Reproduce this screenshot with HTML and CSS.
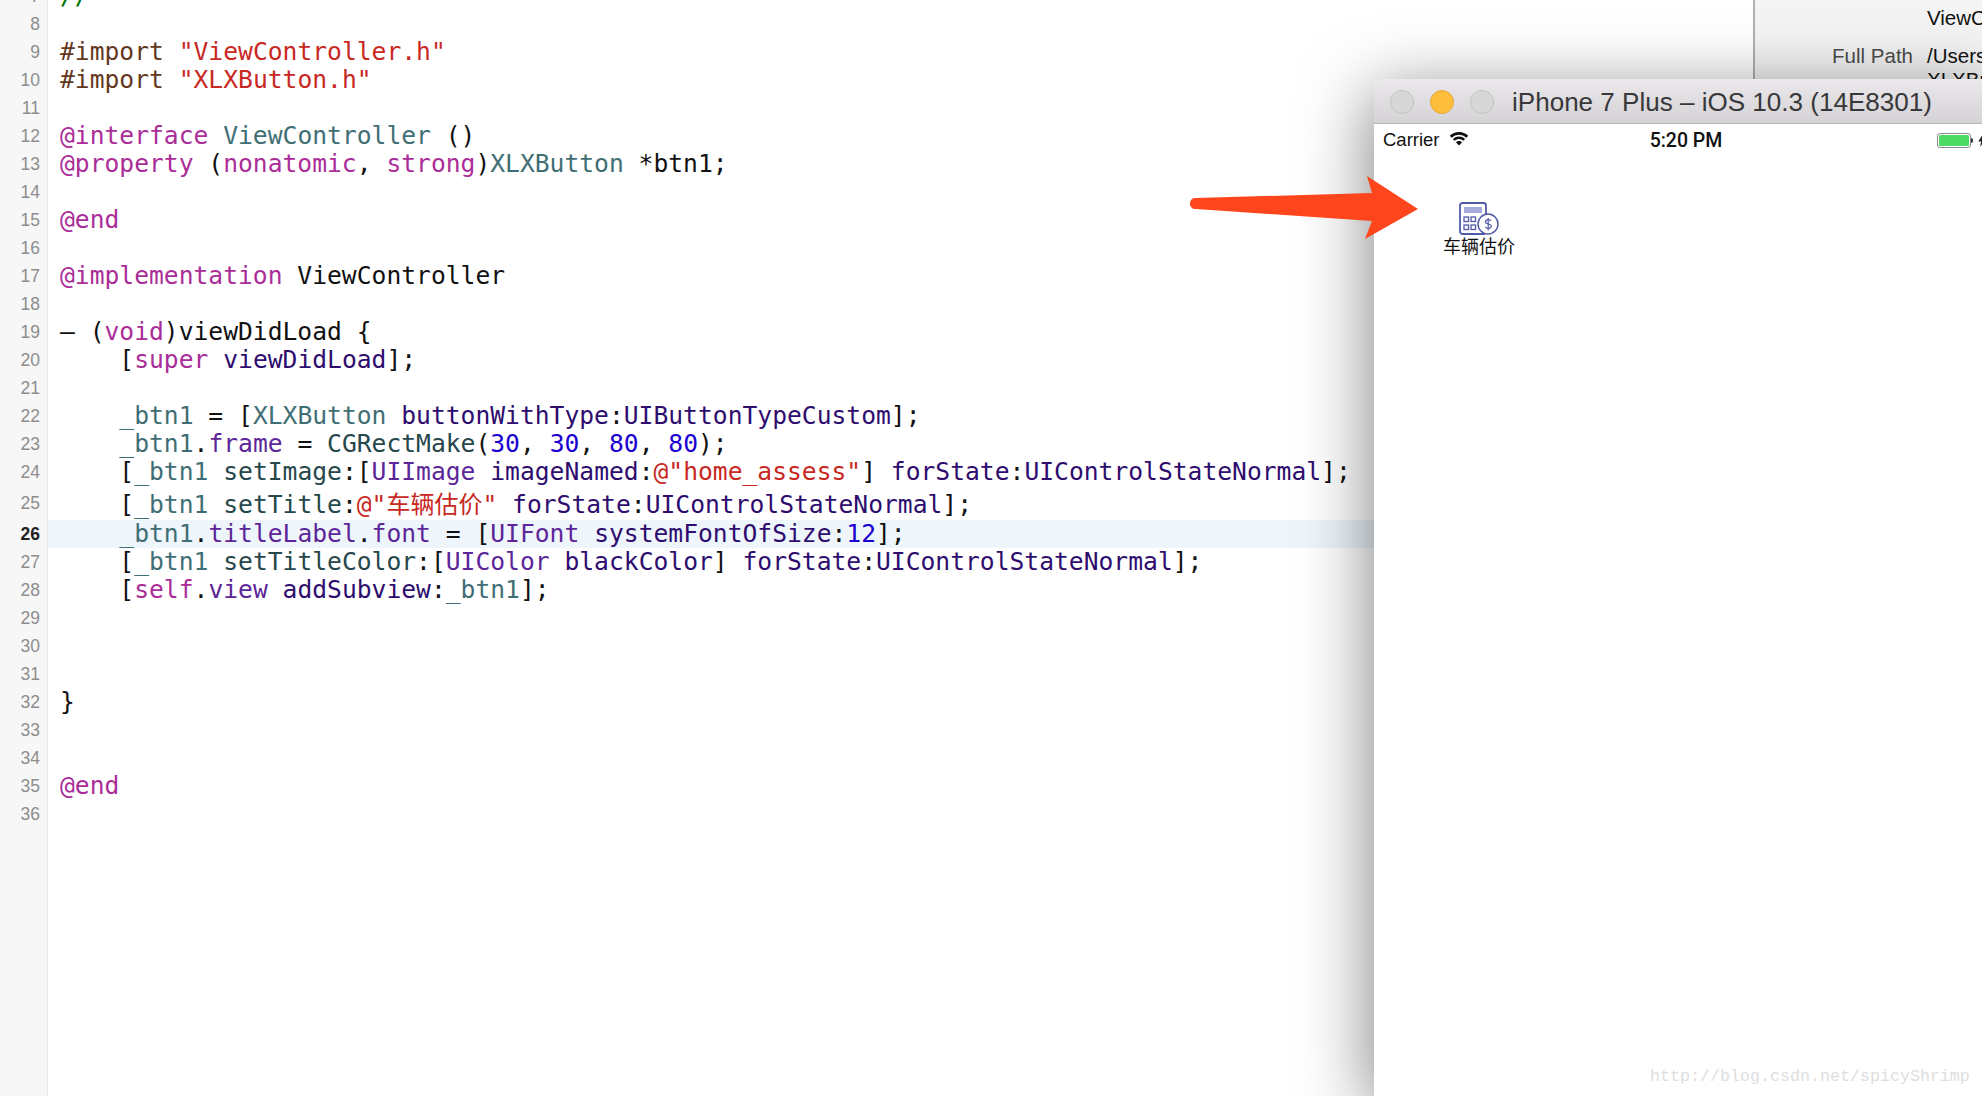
FILE: index.html
```html
<!DOCTYPE html>
<html lang="en">
<head>
<meta charset="utf-8">
<title>Xcode and iOS Simulator</title>
<link rel="stylesheet" href="styles.css">
</head>
<body>
<main class="editor">
  <div class="row row-first"><span class="num">7</span><code class="code"><span class="cm">//</span></code></div>
  <div class="row"><span class="num">8</span><code class="code"></code></div>
  <div class="row"><span class="num">9</span><code class="code"><span class="pp">#import</span> <span class="str">"ViewController.h"</span></code></div>
  <div class="row"><span class="num">10</span><code class="code"><span class="pp">#import</span> <span class="str">"XLXButton.h"</span></code></div>
  <div class="row"><span class="num">11</span><code class="code"></code></div>
  <div class="row"><span class="num">12</span><code class="code"><span class="kw">@interface</span> <span class="cls">ViewController</span> ()</code></div>
  <div class="row"><span class="num">13</span><code class="code"><span class="kw">@property</span> (<span class="kw">nonatomic</span>, <span class="kw">strong</span>)<span class="cls">XLXButton</span> *btn1;</code></div>
  <div class="row"><span class="num">14</span><code class="code"></code></div>
  <div class="row"><span class="num">15</span><code class="code"><span class="kw">@end</span></code></div>
  <div class="row"><span class="num">16</span><code class="code"></code></div>
  <div class="row"><span class="num">17</span><code class="code"><span class="kw">@implementation</span> ViewController</code></div>
  <div class="row"><span class="num">18</span><code class="code"></code></div>
  <div class="row"><span class="num">19</span><code class="code">– (<span class="kw">void</span>)viewDidLoad {</code></div>
  <div class="row"><span class="num">20</span><code class="code">    [<span class="kw">super</span> <span class="sys">viewDidLoad</span>];</code></div>
  <div class="row"><span class="num">21</span><code class="code"></code></div>
  <div class="row"><span class="num">22</span><code class="code">    <span class="cls">_btn1</span> = [<span class="cls">XLXButton</span> <span class="sys">buttonWithType</span>:<span class="sys">UIButtonTypeCustom</span>];</code></div>
  <div class="row"><span class="num">23</span><code class="code">    <span class="cls">_btn1</span>.<span class="prop">frame</span> = <span class="fn">CGRectMake</span>(<span class="n">30</span>, <span class="n">30</span>, <span class="n">80</span>, <span class="n">80</span>);</code></div>
  <div class="row"><span class="num">24</span><code class="code">    [<span class="cls">_btn1</span> <span class="fn">setImage</span>:[<span class="prop">UIImage</span> <span class="sys">imageNamed</span>:<span class="str">@"home_assess"</span>] <span class="sys">forState</span>:<span class="sys">UIControlStateNormal</span>];</code></div>
  <div class="row row-cjk"><span class="num">25</span><code class="code">    [<span class="cls">_btn1</span> <span class="fn">setTitle</span>:<span class="str">@"<span class="cjk">车辆估价</span>"</span> <span class="sys">forState</span>:<span class="sys">UIControlStateNormal</span>];</code></div>
  <div class="row row-current"><span class="num">26</span><code class="code">    <span class="cls">_btn1</span>.<span class="prop">titleLabel</span>.<span class="prop">font</span> = [<span class="prop">UIFont</span> <span class="sys">systemFontOfSize</span>:<span class="n">12</span>];</code></div>
  <div class="row"><span class="num">27</span><code class="code">    [<span class="cls">_btn1</span> <span class="fn">setTitleColor</span>:[<span class="prop">UIColor</span> <span class="sys">blackColor</span>] <span class="sys">forState</span>:<span class="sys">UIControlStateNormal</span>];</code></div>
  <div class="row"><span class="num">28</span><code class="code">    [<span class="kw">self</span>.<span class="prop">view</span> <span class="sys">addSubview</span>:<span class="cls">_btn1</span>];</code></div>
  <div class="row"><span class="num">29</span><code class="code"></code></div>
  <div class="row"><span class="num">30</span><code class="code"></code></div>
  <div class="row"><span class="num">31</span><code class="code"></code></div>
  <div class="row"><span class="num">32</span><code class="code">}</code></div>
  <div class="row"><span class="num">33</span><code class="code"></code></div>
  <div class="row"><span class="num">34</span><code class="code"></code></div>
  <div class="row"><span class="num">35</span><code class="code"><span class="kw">@end</span></code></div>
  <div class="row"><span class="num">36</span><code class="code"></code></div>
</main>

<aside class="inspector">
  <div class="insp-row"><span class="insp-label"></span><span class="insp-value">ViewController.m</span></div>
  <div class="insp-row"><span class="insp-label">Full Path</span><span class="insp-value">/Users/<br>XLXButton</span></div>
</aside>

<section class="sim">
  <header class="sim-title">
    <span class="light"></span>
    <span class="light light-min"></span>
    <span class="light"></span>
    <h1 class="sim-name">iPhone 7 Plus – iOS 10.3 (14E8301)</h1>
  </header>
  <div class="status">
    <div class="status-left">
      <span>Carrier</span>
      <svg class="wifi" viewBox="0 0 20 15" aria-hidden="true"><path d="M10 14.5 6.9 11.2a4.4 4.4 0 0 1 6.2 0Z"/><path d="M5.6 9.8 3.9 8a8.8 8.8 0 0 1 12.2 0l-1.7 1.8a6.4 6.4 0 0 0-8.8 0Z"/><path d="M2.6 6.7.8 4.8a13.3 13.3 0 0 1 18.4 0l-1.8 1.9a10.7 10.7 0 0 0-14.8 0Z"/></svg>
    </div>
    <div class="status-time">5:20 PM</div>
    <div class="status-right">
      <span class="battery"><span class="battery-fill"></span></span>
      <span class="battery-nub"></span>
      <svg class="bolt" viewBox="0 0 8 14" aria-hidden="true"><path d="M5 0 0 8h3l-1 6 6-9H4.500Z"/></svg>
    </div>
  </div>
  <div class="screen">
    <button class="app-btn" type="button">
      <svg class="app-icon" viewBox="0 0 40 33" aria-hidden="true">
        <rect class="ic-body" x="1" y="1" width="26" height="31" rx="2.500"/>
        <rect class="ic-screen" x="5" y="5" width="18" height="6"/>
        <g class="ic-keys">
          <rect x="5" y="15" width="4.500" height="4.500"/><rect x="12" y="15" width="4.500" height="4.500"/>
          <rect x="5" y="23" width="4.500" height="4.500"/><rect x="12" y="23" width="4.500" height="4.500"/>
        </g>
        <circle class="ic-coin" cx="29" cy="22" r="10"/>
        <path class="ic-dollar" d="M32 19c-.6-.9-1.600-1.300-2.800-1.300-1.500 0-2.700.8-2.700 2.100 0 2.900 5.800 1.500 5.800 4.500 0 1.300-1.300 2.100-3 2.100-1.400 0-2.500-.5-3-1.400M29.200 16v12.500"/>
      </svg>
      <span class="app-label">车辆估价</span>
    </button>
  </div>
</section>

<svg class="arrow" viewBox="0 0 228 63" aria-hidden="true">
  <path d="M6 22 182 17 177 0 228 33 175 63 182 45 6 33C2 33 0 31 0 27.500 0 24 2 22 6 22Z"/>
</svg>

<div class="watermark">http://blog.csdn.net/spicyShrimp</div>
</body>
</html>
```

FILE: styles.css
```css
html, body {
  margin: 0;
  height: 100%;
  overflow: hidden;
  background: #fff;
}

body {
  position: relative;
  font-family: "Liberation Sans", "Noto Sans CJK SC", sans-serif;
}

/* Editor */
.editor {
  display: flex;
  flex-direction: column;
  height: calc(100% + 18px);
  margin-top: -18px;
  background: linear-gradient(to right, #f7f7f7 47px, #e6e6e6 47px, #e6e6e6 48px, #fff 48px);
}

.row {
  flex: none;
  display: grid;
  grid-template-columns: 48px 1fr;
  height: 28px;
  line-height: 28px;
}

.row-cjk {
  height: 34px;
  line-height: 34px;
}

.num {
  padding-right: 8px;
  text-align: right;
  font-size: 17.500px;
  color: #8d8d8d;
}

.code {
  padding-left: 12px;
  white-space: pre;
  font-family: "DejaVu Sans Mono", "Noto Sans CJK SC", monospace;
  font-size: 24.650px;
  color: #111;
}

.row-current .code {
  background: #eef5fb;
}

.row-current .num {
  font-weight: 700;
  color: #222;
}

.cjk {
  font-family: "Noto Sans CJK SC", sans-serif;
  font-size: 24px;
}

.cm { color: #007400; }
.pp { color: #643820; }
.str { color: #c8281f; }
.kw { color: #aa2d98; }
.cls { color: #3f6e74; }
.prop { color: #5c2699; }
.sys { color: #2e0d6e; }
.fn { color: #26474b; }
.n { color: #1c00cf; }

/* Inspector behind the simulator */
.inspector {
  position: absolute;
  top: 0;
  left: 1753px;
  right: 0;
  height: 100px;
  overflow: hidden;
  box-sizing: border-box;
  padding-top: 6px;
  border-left: 2px solid #b0b0b0;
  background: #f4f4f4;
  font-size: 20.500px;
}

.insp-row {
  display: grid;
  grid-template-columns: 158px 1fr;
  column-gap: 14px;
  margin-bottom: 14px;
  line-height: 24px;
  white-space: nowrap;
  color: #111;
}

.insp-label {
  text-align: right;
  color: #4c4c4c;
}

/* Simulator window */
.sim {
  position: absolute;
  top: 79px;
  left: 1374px;
  width: 624px;
  height: 1017px;
  border-radius: 9px 9px 0 0;
  background: #fff;
  box-shadow: -2px 14px 70px rgba(0, 0, 0, .5);
}

.sim-title {
  display: flex;
  align-items: center;
  gap: 16px;
  box-sizing: border-box;
  height: 45px;
  padding: 1px 0 0 16px;
  border-radius: 9px 9px 0 0;
  border-bottom: 1px solid #b9b8b9;
  background: linear-gradient(#ebe9eb, #d4d2d4);
}

.light {
  box-sizing: border-box;
  width: 24px;
  height: 24px;
  border-radius: 50%;
  border: 1px solid #c2c2c2;
  background: #d8d7d8;
}

.light-min {
  border-color: #e2a93a;
  background: #ffbd3c;
}

.sim-name {
  margin: 2px 0 0 2px;
  font-size: 26.050px;
  font-weight: 400;
  white-space: nowrap;
  color: #38383a;
}

.status {
  display: grid;
  grid-template-columns: 1fr auto 1fr;
  align-items: center;
  height: 32px;
  font-size: 18.500px;
  color: #111;
}

.status-left {
  display: flex;
  align-items: center;
  gap: 9px;
  padding-left: 9px;
}

.wifi {
  width: 20px;
  height: 15px;
  margin-top: -4px;
  fill: #111;
}

.status-time {
  font-family: "Roboto", "Liberation Sans", sans-serif;
  font-weight: 500;
  font-size: 19.500px;
}

.status-right {
  display: flex;
  align-items: center;
  padding-left: 215px;
}

.battery {
  box-sizing: border-box;
  width: 34px;
  height: 15px;
  padding: 1px;
  border: 1px solid #8a8a8a;
  border-radius: 3px;
}

.battery-fill {
  display: block;
  height: 100%;
  border-radius: 1px;
  background: #4cd964;
}

.battery-nub {
  width: 2px;
  height: 5px;
  margin-right: 5px;
  border-radius: 0 2px 2px 0;
  background: #333;
}

.bolt {
  width: 8px;
  height: 13px;
  fill: #222;
}

.screen {
  padding: 46px 0 0 69px;
}

.app-btn {
  display: flex;
  flex-direction: column;
  align-items: center;
  width: 72px;
  padding: 0;
  border: 0;
  background: none;
}

.app-icon {
  width: 40px;
  height: 33px;
}

.ic-body { fill: #fff; stroke: #525aa8; stroke-width: 1.800; }
.ic-screen { fill: #a6aadf; }
.ic-keys rect { fill: none; stroke: #525aa8; stroke-width: 1.300; }
.ic-coin { fill: #fff; stroke: #525aa8; stroke-width: 1.500; }
.ic-dollar { fill: none; stroke: #525aa8; stroke-width: 1.200; }

.app-label {
  margin-top: -2px;
  font-family: "Noto Sans CJK SC", sans-serif;
  font-size: 18px;
  line-height: 24px;
  white-space: nowrap;
  color: #111;
}

/* Annotation and watermark */
.arrow {
  position: absolute;
  top: 176px;
  left: 1190px;
  width: 228px;
  height: 63px;
  overflow: visible;
  fill: #ff451b;
}

.watermark {
  position: absolute;
  top: 1067px;
  left: 1650px;
  font-family: "Liberation Mono", monospace;
  font-size: 16.670px;
  line-height: 20px;
  white-space: nowrap;
  color: #dedede;
}
```
